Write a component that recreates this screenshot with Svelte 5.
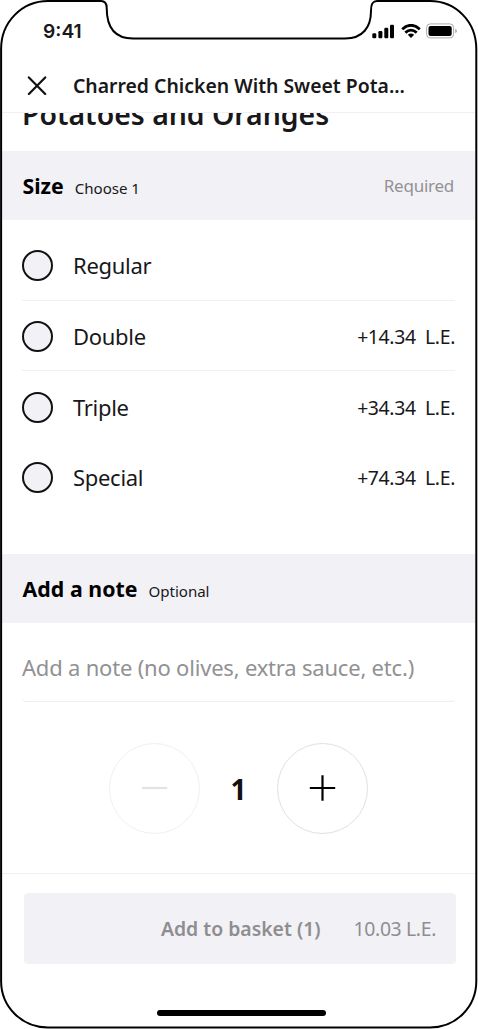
<script lang="ts">
	interface SizeOption {
		name: string
		price?: string
	}

	const sizes: SizeOption[] = [
		{ name: 'Regular' },
		{ name: 'Double', price: '+14.34' },
		{ name: 'Triple', price: '+34.34' },
		{ name: 'Special', price: '+74.34' },
	]

	let selected = $state('')
	let note = $state('')
	let quantity = $state(1)
</script>

<main class="phone">
	<header class="status">
		<span class="time">9:41</span>
		<div class="indicators" aria-hidden="true">
			<svg class="signal" width="23" height="15" viewBox="0 0 23 15">
				<rect x="0.3" y="9.3" width="4" height="4.9" rx="1.2" />
				<rect x="6.4" y="7" width="4" height="7.2" rx="1.2" />
				<rect x="12.3" y="3.8" width="4" height="10.4" rx="1.2" />
				<rect x="18" y="0.7" width="4" height="13.5" rx="1.2" />
			</svg>
			<svg class="wifi" width="20" height="15" viewBox="0 0 20 15">
				<path d="M1.2 5.2Q10 -2.6 18.8 5.2M4.3 8.6Q10 3.6 15.7 8.6" />
				<path class="fill" d="M6.8 10.7Q10 8.2 13.2 10.7L10 14Z" />
			</svg>
			<svg class="battery" width="32" height="16" viewBox="0 0 32 16">
				<rect class="shell" x="0.6" y="0.9" width="27" height="14" rx="3.6" />
				<rect x="2.5" y="2.9" width="23.2" height="10" rx="2" />
				<path class="cap" d="M29.2 5.7Q31 6.4 31 7.9T29.2 10.2Z" />
			</svg>
		</div>
	</header>

	<nav>
		<button class="close" aria-label="Close">
			<svg width="20" height="20" viewBox="0 0 20 20">
				<path d="M1.9 1.4L18.2 17.9M18.2 1.4L1.9 17.9" />
			</svg>
		</button>
		<strong>Charred Chicken With Sweet Pota...</strong>
	</nav>

	<div class="headline">
		<h1>Potatoes and Oranges</h1>
	</div>

	<section>
		<div class="band">
			<h2>Size</h2>
			<small>Choose 1</small>
			<span class="required">Required</span>
		</div>
		<ul>
			{#each sizes as size (size.name)}
				<li>
					<label>
						<input type="radio" name="size" value={size.name} bind:group={selected} />
						<span class="name">{size.name}</span>
						{#if size.price}
							<span class="price">{size.price}&nbsp; L.E.</span>
						{/if}
					</label>
				</li>
			{/each}
		</ul>
	</section>

	<section>
		<div class="band">
			<h2 class="note-title">Add a note</h2>
			<small>Optional</small>
		</div>
		<input
			class="note"
			type="text"
			bind:value={note}
			placeholder="Add a note (no olives, extra sauce, etc.)"
		/>
	</section>

	<div class="stepper">
		<button aria-label="Remove one" disabled={quantity === 1} onclick={() => quantity--}>
			<svg width="27" height="27" viewBox="0 0 27 27"><path d="M0.8 13H26.2" /></svg>
		</button>
		<output>{quantity}</output>
		<button aria-label="Add one" onclick={() => quantity++}>
			<svg width="27" height="27" viewBox="0 0 27 27"><path d="M0.8 13H26.2M13.5 0.3V25.7" /></svg>
		</button>
	</div>

	<footer>
		<button class="basket" disabled={!selected}>
			<strong>Add to basket ({quantity})</strong>
			<span>10.03 L.E.</span>
		</button>
		<div class="home"></div>
	</footer>

	<!-- device outline with the notch -->
	<svg class="frame" width="478" height="1029" viewBox="0 0 478 1029" aria-hidden="true">
		<path
			d="M48 1H101C105 1 106.7 3 106.7 8C106.7 26 114 38.5 133 38.5H345C363 38.5 371 27 371 11C371 4 372.5 1 377 1H430C456 1 476.3 22 476.3 49V981C476.3 1007 456 1027.5 430 1027.5H48C22 1027.5 1.1 1007 1.1 981V49C1.1 22 22 1 48 1Z"
		/>
	</svg>
</main>

<style>
	:global(body) {
		margin: 0;
		background: #fff;
	}
	.phone {
		position: relative;
		box-sizing: border-box;
		width: 478px;
		height: 1029px;
		padding: 0 3px 0 2px;
		overflow: hidden;
		display: flex;
		flex-direction: column;
		background: #fff;
		color: #18181a;
		font-family: 'Noto Sans', sans-serif;
	}
	button {
		padding: 0;
		border: 0;
		background: none;
		color: inherit;
		font-family: inherit;
	}
	svg {
		display: block;
		flex: none;
	}
	.status {
		height: 62px;
		box-sizing: border-box;
		padding: 0 17px 0 41px;
		display: flex;
		justify-content: space-between;
		align-items: center;
	}
	.time {
		font-family: Inter, sans-serif;
		font-size: 19.2px;
		font-weight: 600;
	}
	.indicators {
		display: flex;
		align-items: center;
		gap: 5.5px;
	}
	.indicators svg {
		fill: #000;
	}
	.indicators .wifi {
		fill: none;
		stroke: #000;
		stroke-width: 2.8;
	}
	.indicators .wifi .fill {
		fill: #000;
		stroke: none;
	}
	.shell {
		fill: none;
		stroke: #aaa;
	}
	.cap {
		fill: #aaa;
	}
	nav {
		height: 51px;
		box-sizing: border-box;
		padding: 0 23px 2px 25px;
		border-bottom: 1px solid #efeff4;
		display: flex;
		align-items: center;
		gap: 26px;
	}
	.close path {
		fill: none;
		stroke: #111;
		stroke-width: 2.2;
		stroke-linecap: round;
	}
	nav strong {
		font-size: 19.4px;
		font-weight: 600;
		line-height: 24px;
		white-space: nowrap;
	}
	.headline {
		height: 38px;
		padding-left: 20px;
		overflow: hidden;
	}
	h1 {
		margin: -18px 0 0;
		font-size: 28.4px;
		font-weight: 600;
		line-height: 38px;
	}
	.band {
		height: 69px;
		box-sizing: border-box;
		padding: 0 21px 0 20.5px;
		display: flex;
		align-items: baseline;
		gap: 11px;
		background: #f2f1f6;
		line-height: 69px;
	}
	h2 {
		margin: 0;
		color: #000;
		font-size: 21.3px;
		font-weight: 700;
	}
	.note-title {
		letter-spacing: 0.05px;
	}
	small {
		font-size: 15.1px;
		letter-spacing: -0.05px;
	}
	.required {
		align-self: flex-start;
		margin-left: auto;
		color: #929295;
		font-size: 17px;
		letter-spacing: -0.25px;
		line-height: 70px;
	}
	ul {
		list-style: none;
		margin: 0;
		padding: 10px 20px 41px;
	}
	li {
		height: 70.7px;
		box-sizing: border-box;
		border-bottom: 1px solid #f1f1f5;
	}
	li:nth-child(n + 3) {
		border-color: transparent;
	}
	label {
		height: 100%;
		box-sizing: border-box;
		padding-top: 2px;
		display: flex;
		align-items: center;
	}
	input[type='radio'] {
		appearance: none;
		width: 31px;
		height: 31px;
		margin: 0 20px 0 0;
		border: 2px solid #111;
		border-radius: 50%;
		background: #f2f1f6;
	}
	input[type='radio']:checked {
		border-width: 9px;
	}
	.name {
		padding-bottom: 1px;
		font-size: 22px;
		letter-spacing: -0.3px;
		line-height: 28px;
	}
	.price {
		margin-left: auto;
		font-size: 19.4px;
		letter-spacing: -0.35px;
	}
	.note {
		display: block;
		box-sizing: border-box;
		width: 433px;
		height: 79px;
		margin-left: 20px;
		padding: 11px 0 0;
		border: 0;
		border-bottom: 1px solid #eeeef0;
		border-radius: 4px;
		outline: 0;
		background: none;
		font-family: inherit;
		font-size: 22px;
		letter-spacing: -0.2px;
	}
	.note::placeholder {
		color: #919194;
		opacity: 1;
	}
	.stepper {
		margin-top: 41px;
		display: flex;
		justify-content: center;
		align-items: center;
	}
	.stepper button {
		width: 91px;
		height: 91px;
		border: 1px solid #e0e0e6;
		border-radius: 50%;
		display: grid;
		place-items: center;
	}
	.stepper button:disabled {
		border-color: #f0f0f2;
	}
	.stepper path {
		fill: none;
		stroke: #000;
		stroke-width: 2.2;
	}
	.stepper button:disabled path {
		stroke: #e3e3e7;
	}
	output {
		width: 77px;
		padding-top: 2px;
		color: #111;
		font-size: 28px;
		font-weight: 700;
		text-align: center;
	}
	footer {
		margin-top: 39px;
		padding: 19px 19px 0 22px;
		border-top: 1px solid #f0f0f3;
		flex: 1;
	}
	.basket {
		width: 100%;
		height: 71px;
		padding: 0 20px 0 0;
		border-radius: 4px;
		display: flex;
		align-items: center;
		justify-content: flex-end;
		gap: 33px;
		background: #f2f1f6;
		color: #8e8e90;
		font-size: 19.4px;
	}
	.basket strong {
		font-weight: 600;
	}
	.basket span {
		letter-spacing: -0.35px;
	}
	.home {
		width: 169px;
		height: 6px;
		margin: 46px 0 0 133px;
		border-radius: 3px;
		background: #000;
	}
	.frame {
		position: absolute;
		inset: 0;
		fill: none;
		stroke: #000;
		stroke-width: 2;
		pointer-events: none;
	}
</style>
